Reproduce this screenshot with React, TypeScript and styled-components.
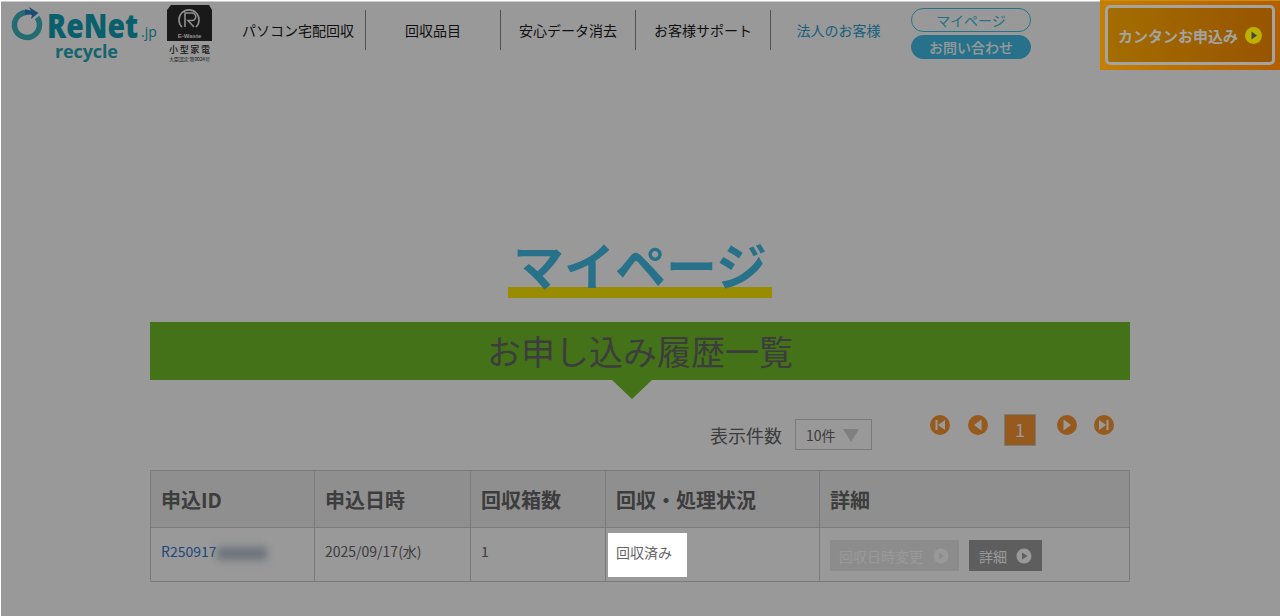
import React from 'react';
import styled, { createGlobalStyle } from 'styled-components';

const GlobalStyle = createGlobalStyle`
  html, body {
    margin: 0;
    height: 100%;
    overflow: hidden;
    background: #fff;
  }
  body {
    font-family: "Noto Sans CJK JP", "Noto Sans", sans-serif;
    color: #666;
  }
`;

const Page = styled.div`
  width: 1280px;
  height: 616px;
  overflow: hidden;
`;

const Header = styled.header`
  height: 70px;
  display: flex;
  align-items: flex-start;
`;

const LogoMark = styled.svg`
  width: 150px;
  height: 70px;
  margin-left: 10px;
  flex: none;
`;

const BadgeMark = styled.svg`
  width: 46px;
  height: 70px;
  margin-left: 7px;
  flex: none;
`;

const Nav = styled.nav`
  display: flex;
  margin: 10px 0 0 18px;
`;

const NavItem = styled.a<{ $corporate?: boolean }>`
  width: 135px;
  height: 40px;
  display: flex;
  align-items: center;
  justify-content: center;
  box-sizing: border-box;
  font-size: 14px;
  color: ${(p) => (p.$corporate ? '#2a9dcf' : '#1c1c1c')};
  border-right: ${(p) => (p.$corporate ? 'none' : '1px solid #888')};
`;

const Account = styled.div`
  width: 120px;
  margin: 8px 0 0 5px;
  display: flex;
  flex-direction: column;
  gap: 3px;
`;

const Pill = styled.a<{ $filled?: boolean }>`
  height: 24px;
  box-sizing: border-box;
  border-radius: 12px;
  border: 1px solid #41bee6;
  background: ${(p) => (p.$filled ? '#41bee6' : '#fff')};
  color: ${(p) => (p.$filled ? '#fff' : '#41bee6')};
  font-size: 14px;
  font-weight: ${(p) => (p.$filled ? 500 : 400)};
  display: flex;
  align-items: center;
  justify-content: center;
`;

const ApplyBand = styled.div`
  position: relative;
  z-index: 20;
  margin-left: auto;
  width: 180px;
  height: 70px;
  box-sizing: border-box;
  padding: 5px;
  background: linear-gradient(90deg, #c47f00, #b25f00);
  box-shadow: inset 0 1px 0 #d08a10;
`;

const ApplyButton = styled.a`
  box-sizing: border-box;
  display: flex;
  align-items: center;
  justify-content: center;
  gap: 7px;
  height: 60px;
  border: 3px solid #a3a3a3;
  border-radius: 5px;
  background: linear-gradient(90deg, #a36d00, #985500);
  color: #a3a3a3;
  font-size: 15px;
  font-weight: 700;
`;

const ApplyArrow = styled.svg`
  width: 17px;
  height: 17px;
`;

const Main = styled.main`
  width: 980px;
  margin: 0 auto;
  display: flex;
  flex-direction: column;
  align-items: center;
`;

const Title = styled.h1`
  margin: 172px 0 0;
  padding: 0 5.5px;
  font-size: 51px;
  line-height: 45px;
  font-weight: 700;
  color: #41bee6;
  border-bottom: 11px solid #ffe900;
`;

const Band = styled.h2`
  align-self: stretch;
  height: 58px;
  margin: 24px 0 0;
  background: #71be2a;
  color: #666;
  font-size: 34px;
  font-weight: 400;
  line-height: 58px;
  text-align: center;
`;

const Notch = styled.div`
  align-self: flex-start;
  margin-left: 462px;
  width: 0;
  height: 0;
  border-left: 20px solid transparent;
  border-right: 20px solid transparent;
  border-top: 19px solid #71be2a;
`;

const Controls = styled.div`
  align-self: stretch;
  height: 36px;
  margin-top: 15px;
  padding-right: 16px;
  display: flex;
  justify-content: flex-end;
  align-items: flex-start;
`;

const CountLabel = styled.span`
  margin-top: 5px;
  font-size: 18px;
  line-height: 32px;
  color: #666;
`;

const CountSelect = styled.div`
  width: 77px;
  height: 31px;
  margin: 5px 0 0 13px;
  box-sizing: border-box;
  border: 1px solid #ccc;
  padding: 1px 0 0 10px;
  display: flex;
  align-items: center;
  gap: 7px;
  font-size: 14px;
  color: #666;
`;

const SelectCaret = styled.span`
  width: 0;
  height: 0;
  border-left: 8px solid transparent;
  border-right: 8px solid transparent;
  border-top: 13px solid #d4d4d4;
`;

const Pager = styled.div`
  margin-left: 58px;
  display: flex;
  align-items: flex-start;
`;

const PageButton = styled.svg<{ $gap: number }>`
  width: 20px;
  height: 20px;
  margin: 1px 0 0 ${(p) => p.$gap}px;
`;

const CurrentPage = styled.span`
  width: 32px;
  height: 32px;
  margin-left: 16px;
  box-sizing: border-box;
  border: 1px solid #ccc;
  background: #fc9632;
  color: #fff;
  font-size: 18px;
  line-height: 28px;
  text-align: center;
`;

const Table = styled.table`
  align-self: flex-start;
  width: 979px;
  margin-top: 20px;
  border-collapse: collapse;
  table-layout: fixed;
`;

const HeadCell = styled.th`
  height: 57px;
  padding: 0 10px;
  box-sizing: border-box;
  border: 1px solid #ccc;
  background: #eee;
  color: #666;
  font-size: 20px;
  font-weight: 700;
  text-align: left;
`;

const Cell = styled.td<{ $tight?: boolean }>`
  height: 54px;
  padding: 0 ${(p) => (p.$tight ? '2px' : '10px')} ${(p) => (p.$tight ? '0' : '7px')};
  box-sizing: border-box;
  border: 1px solid #ccc;
  font-size: 14px;
  color: #666;
`;

const IdLink = styled.a`
  color: #2f79cf;
`;

const BlurredId = styled.span`
  display: inline-block;
  filter: blur(4px);
  background: #b4bfcd;
  width: 50px;
  height: 13px;
  vertical-align: middle;
`;

/* the page is dimmed by this one label's shadow, the tour step it points at */
const Spotlight = styled.span`
  position: relative;
  z-index: 10;
  display: flex;
  align-items: center;
  width: 79px;
  height: 44px;
  padding: 0 0 6px 8px;
  box-sizing: border-box;
  background: #fff;
  color: #666;
  box-shadow: 0 0 0 1400px rgba(0, 0, 0, 0.4);
  clip-path: inset(-531px -1000px -200px -607px);
`;

const Actions = styled.div`
  display: flex;
  gap: 10px;
  margin-top: 9px;
`;

const ActionButton = styled.a<{ $disabled?: boolean }>`
  height: 31px;
  box-sizing: border-box;
  padding: 0 10px 0 ${(p) => (p.$disabled ? 9 : 10)}px;
  display: flex;
  align-items: center;
  gap: ${(p) => (p.$disabled ? 10 : 9)}px;
  background: ${(p) => (p.$disabled ? '#eaeaea' : '#9d9d9d')};
  color: #fff;
  font-size: 14px;
`;

const ActionArrow = styled.svg`
  width: 16px;
  height: 16px;
`;

function Arrow({ color }: { color: string }) {
  return (
    <ActionArrow viewBox="0 0 16 16">
      <circle cx="8" cy="8" r="7.5" fill="#fff" />
      <path d="M6 4.5 L11.5 8 L6 11.5 Z" fill={color} />
    </ActionArrow>
  );
}

function Logo() {
  return (
    <LogoMark viewBox="10 0 150 70">
      <path d="M37 17.5 A12.5 12.5 0 1 1 26 12.5" fill="none" stroke="#3eb3bf" strokeWidth="5.5" />
      <path d="M25 9.5 C27 9.5 30 10 31 11 L29 7 L38.5 13 L31 19 L32 15 C30 14 28 14.5 25 15 Z" fill="#2f7fc0" />
      <text x="47" y="38" fontFamily="Open Sans" fontWeight="800" fontSize="34" fill="#0fa0b5" textLength="91" lengthAdjust="spacingAndGlyphs">ReNet</text>
      <text x="141" y="37" fontFamily="Open Sans" fontSize="14" fill="#0fa0b5">.jp</text>
      <text x="55" y="58" fontFamily="Open Sans" fontWeight="700" fontSize="18" fill="#22a8b8" textLength="63">recycle</text>
    </LogoMark>
  );
}

function Badge() {
  return (
    <BadgeMark viewBox="0 0 46 70">
      <path d="M4 5 H42 L45 10 V41 H0 V10 Z" fill="#2a2a2a" />
      <path d="M15 27 A10 10 0 1 1 29 27" fill="none" stroke="#eee" strokeWidth="1.6" />
      <path d="M18 27 V13 H25 A3.6 3.6 0 0 1 25 20.5 H21 L27 27" fill="none" stroke="#eee" strokeWidth="1.6" />
      <text x="22.5" y="37.5" textAnchor="middle" fontFamily="Liberation Sans" fontWeight="700" fontSize="6" fill="#eee">E-Waste</text>
      <text x="2" y="52.5" fontSize="9" fontWeight="500" fill="#2a2a2a" textLength="41">小型家電</text>
      <text x="2" y="60.5" fontSize="5" fill="#2a2a2a" textLength="41">大臣認定 第0024号</text>
    </BadgeMark>
  );
}

type PagerKind = 'first' | 'prev' | 'next' | 'last';

function PagerIcon({ kind, gap }: { kind: PagerKind; gap: number }) {
  const shapes: Record<PagerKind, React.ReactNode> = {
    first: <path d="M5.5 5 H7.5 V15 H5.5 Z M15 5 V15 L8 10 Z" fill="#fff" />,
    prev: <path d="M13.5 4.5 V15.5 L6 10 Z" fill="#fff" />,
    next: <path d="M6.5 4.5 V15.5 L14 10 Z" fill="#fff" />,
    last: <path d="M14.5 5 H12.5 V15 H14.5 Z M5 5 V15 L12 10 Z" fill="#fff" />,
  };
  return (
    <PageButton viewBox="0 0 20 20" $gap={gap}>
      <circle cx="10" cy="10" r="10" fill="#fc9632" />
      {shapes[kind]}
    </PageButton>
  );
}

export default function App() {
  return (
    <Page>
      <GlobalStyle />
      <Header>
        <Logo />
        <Badge />
        <Nav>
          <NavItem>パソコン宅配回収</NavItem>
          <NavItem>回収品目</NavItem>
          <NavItem>安心データ消去</NavItem>
          <NavItem>お客様サポート</NavItem>
          <NavItem $corporate>法人のお客様</NavItem>
        </Nav>
        <Account>
          <Pill>マイページ</Pill>
          <Pill $filled>お問い合わせ</Pill>
        </Account>
        <ApplyBand>
          <ApplyButton>
            カンタンお申込み
            <ApplyArrow viewBox="0 0 17 17">
              <circle cx="8.5" cy="8.5" r="8.5" fill="#bdb000" />
              <path d="M6.5 4.5 L12 8.5 L6.5 12.5 Z" fill="#444" />
            </ApplyArrow>
          </ApplyButton>
        </ApplyBand>
      </Header>
      <Main>
        <Title>マイページ</Title>
        <Band>お申し込み履歴一覧</Band>
        <Notch />
        <Controls>
          <CountLabel>表示件数</CountLabel>
          <CountSelect>
            10件
            <SelectCaret />
          </CountSelect>
          <Pager>
            <PagerIcon kind="first" gap={0} />
            <PagerIcon kind="prev" gap={18} />
            <CurrentPage>1</CurrentPage>
            <PagerIcon kind="next" gap={21} />
            <PagerIcon kind="last" gap={17} />
          </Pager>
        </Controls>
        <Table>
          <colgroup>
            <col style={{ width: 164 }} />
            <col style={{ width: 156 }} />
            <col style={{ width: 135 }} />
            <col style={{ width: 214 }} />
            <col style={{ width: 310 }} />
          </colgroup>
          <thead>
            <tr>
              <HeadCell>申込ID</HeadCell>
              <HeadCell>申込日時</HeadCell>
              <HeadCell>回収箱数</HeadCell>
              <HeadCell>回収・処理状況</HeadCell>
              <HeadCell>詳細</HeadCell>
            </tr>
          </thead>
          <tbody>
            <tr>
              <Cell>
                <IdLink>
                  R250917
                  <BlurredId />
                </IdLink>
              </Cell>
              <Cell>2025/09/17(水)</Cell>
              <Cell>1</Cell>
              <Cell $tight>
                <Spotlight>回収済み</Spotlight>
              </Cell>
              <Cell>
                <Actions>
                  <ActionButton $disabled>
                    回収日時変更
                    <Arrow color="#eaeaea" />
                  </ActionButton>
                  <ActionButton>
                    詳細
                    <Arrow color="#9d9d9d" />
                  </ActionButton>
                </Actions>
              </Cell>
            </tr>
          </tbody>
        </Table>
      </Main>
    </Page>
  );
}
